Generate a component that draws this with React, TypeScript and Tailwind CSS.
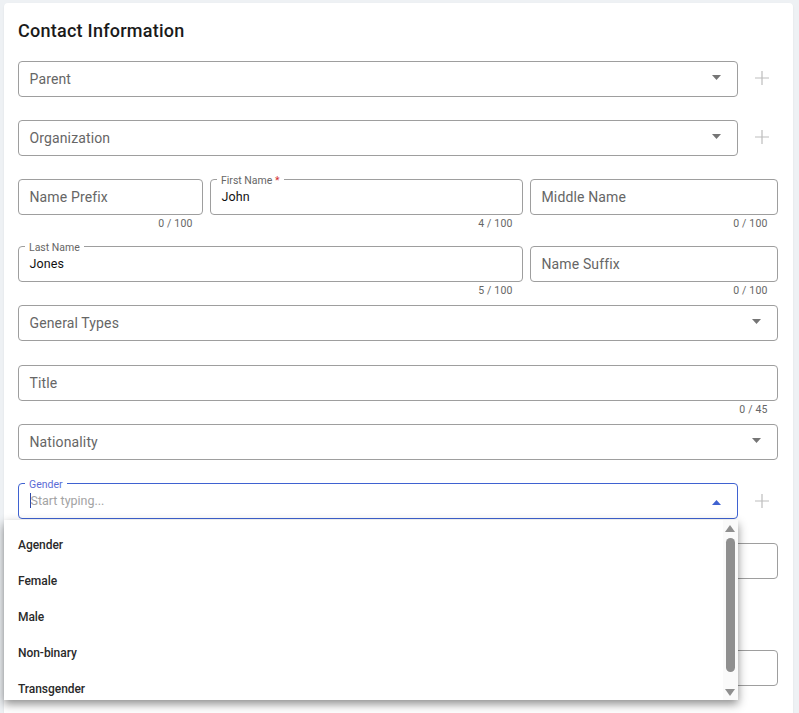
// Contact information form with the gender dropdown open
const font = 'font-["Roboto",sans-serif]';

function Caret({ up = false }: { up?: boolean }) {
  return (
    <svg width="9" height="5" viewBox="0 0 9 5" className="block">
      {up ? <path d="M4.5 0 9 5H0Z" fill="#3f62d1" /> : <path d="M0 0H9L4.5 5Z" fill="#757575" />}
    </svg>
  );
}

function PlusIcon({ className = '' }: { className?: string }) {
  return (
    <svg width="14" height="14" viewBox="0 0 14 14" className={`block shrink-0 ${className}`}>
      <path d="M7 0V14M0 7H14" stroke="#bdbdbd" strokeWidth="1.2" fill="none" />
    </svg>
  );
}

function Box({ children, focused = false, className = '' }: { children?: React.ReactNode; focused?: boolean; className?: string }) {
  return (
    <div className={`relative flex h-9 items-center rounded-[4px] border bg-white pl-[10.5px] pr-[16px] ${focused ? 'border-[#3f62d1]' : 'border-[#9e9e9e]'} ${className}`}>
      {children}
    </div>
  );
}

function SelectField({ label, addable = false, className = '' }: { label: string; addable?: boolean; className?: string }) {
  return (
    <div className={`flex items-center ${className}`}>
      <Box className="flex-1 justify-between">
        <span className="text-[14px] tracking-[0.13px] text-[#666666]">{label}</span>
        <span className="mt-[-3px]"><Caret /></span>
      </Box>
      {addable && <PlusIcon className="ml-[17px] mr-[9px] mt-[-2px]" />}
    </div>
  );
}

function Counter({ text }: { text: string }) {
  return <div className="h-4 pr-[10.5px] pt-[2px] text-right text-[10.5px] leading-[14px] tracking-[0.15px] text-[#666666]">{text}</div>;
}

function TextField({ label, value, required = false, count }: { label: string; value?: string; required?: boolean; count: string }) {
  return (
    <div>
      <Box>
        {value ? (
          <>
            <span className="absolute left-[6px] top-[-5px] bg-white px-[4px] text-[10.5px] leading-[12px] text-[#666666]">
              {label}
              {required && <span className="text-[#d32f2f]"> *</span>}
            </span>
            <span className="mt-[1px] text-[12.5px] tracking-[0.1px] text-[#111111]">{value}</span>
          </>
        ) : (
          <span className="text-[14px] tracking-[0.13px] text-[#666666]">{label}</span>
        )}
      </Box>
      <Counter text={count} />
    </div>
  );
}

function GenderDropdown() {
  const options = ['Agender', 'Female', 'Male', 'Non-binary', 'Transgender'];
  return (
    <div className="absolute left-[-15px] top-[36px] z-10 h-[180px] w-[734px] overflow-hidden bg-white shadow-[0_4px_9px_rgba(0,0,0,0.45)]">
      {options.map((o) => (
        <div key={o} className="flex h-9 items-center pl-[14px] text-[12px] font-medium tracking-[-0.05px] text-[#2a2a2a] first:mt-[7px]">
          {o}
        </div>
      ))}
      <div className="absolute bottom-0 right-0 top-0 flex w-[15px] flex-col items-center bg-[#fafafa] pr-[1px]">
        <svg width="10" height="7" viewBox="0 0 10 7" className="mt-[5px] block">
          <path d="M5 0 10 7H0Z" fill="#8f8f8f" />
        </svg>
        <div className="mt-[6px] h-[134px] w-[9px] rounded-full bg-[#8f8f8f]" />
        <svg width="10" height="7" viewBox="0 0 10 7" className="mt-[17px] block">
          <path d="M0 0H10L5 7Z" fill="#8f8f8f" />
        </svg>
      </div>
    </div>
  );
}

function GenderField() {
  return (
    <div className="mb-6 flex items-center">
      <Box focused className="flex-1 justify-between">
        <span className="absolute left-[6px] top-[-5px] bg-white px-[4px] text-[10.5px] leading-[12px] text-[#5c6bd6]">Gender</span>
        <span className="mt-[-1px] border-l border-[#2f4aa8] text-[12.5px] leading-[15px] text-[#a3a3a3]">Start typing...</span>
        <span className="mt-[2px]"><Caret up /></span>
        <GenderDropdown />
      </Box>
      <PlusIcon className="ml-[17px] mr-[9px]" />
    </div>
  );
}

export default function App() {
  return (
    <div className={`h-[713px] overflow-hidden bg-[#eef1f4] pl-1 pr-[6px] pt-[3px] ${font}`}>
      <div className="h-[760px] rounded-[4px] bg-white pl-[14px] pr-[15px] shadow-[0_1px_2px_rgba(0,0,0,0.08)]">
        <h2 className="pb-[17px] pt-[14px] text-[18px] font-medium leading-[27px] tracking-[0.25px] text-[#1a1a1a]">Contact Information</h2>

        <SelectField label="Parent" addable className="mb-[23px]" />
        <SelectField label="Organization" addable className="mb-[23px]" />

        <div className="mb-[15px] grid grid-cols-[185px_1fr_248px] gap-x-[7px]">
          <TextField label="Name Prefix" count="0 / 100" />
          <TextField label="First Name" value="John" required count="4 / 100" />
          <TextField label="Middle Name" count="0 / 100" />
        </div>

        <div className="mb-[7px] grid grid-cols-[1fr_248px] gap-x-[7px]">
          <TextField label="Last Name" value="Jones" count="5 / 100" />
          <TextField label="Name Suffix" count="0 / 100" />
        </div>

        <SelectField label="General Types" className="mb-6" />

        <div className="mb-[7px]">
          <TextField label="Title" count="0 / 45" />
        </div>

        <SelectField label="Nationality" className="mb-[23px]" />

        <GenderField />

        <Box className="mb-[71px]" />
        <Box />
      </div>
    </div>
  );
}
